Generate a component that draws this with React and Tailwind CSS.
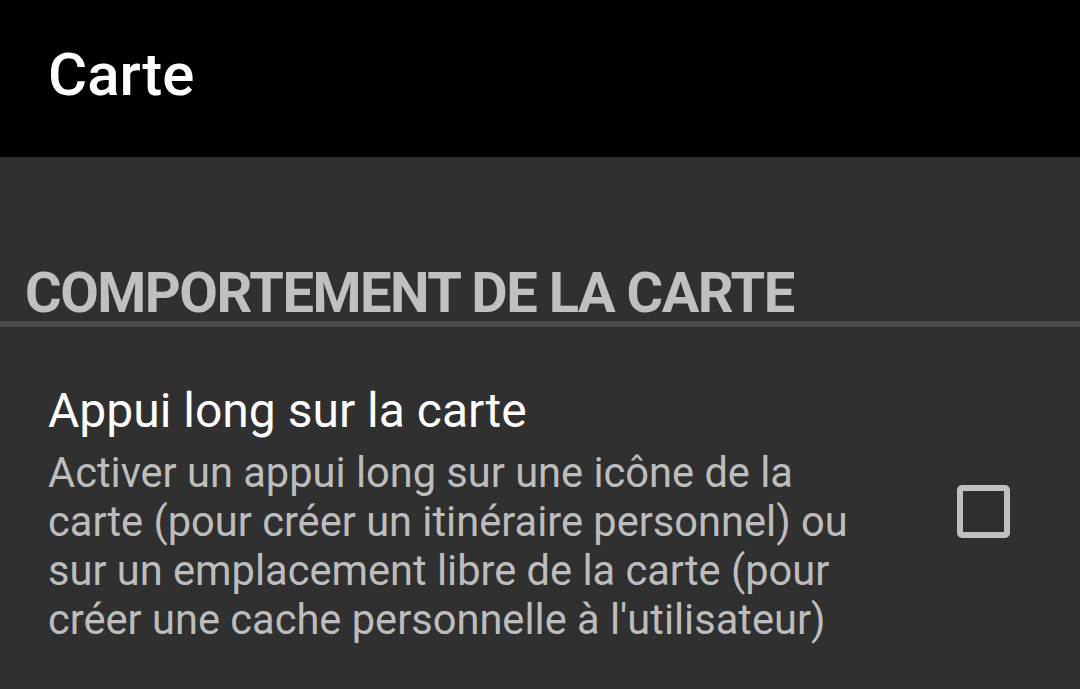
import React from "react";

function App() {
  return (
    <div className="w-[1080px] h-[689px] overflow-hidden bg-[#303030]" style={{ fontFamily: "Roboto, sans-serif" }}>
      <div className="h-[157px] bg-black flex items-center px-[48px]">
        <h1 className="text-[60px] font-medium text-white leading-none -mt-[8px]">Carte</h1>
      </div>
      <div className="pt-[106px]">
        <h3 className="px-[25px] text-[56px] font-bold text-[#c0c0c0] uppercase leading-[60px] tracking-[-1.5px]">
          Comportement de la carte
        </h3>
        <div className="h-[6px] bg-[#4a4a4a] -mt-[2px]"></div>
      </div>
      <div className="flex items-center pl-[48px] pt-[55px]">
        <div className="w-[815px]">
          <div className="text-[48px] text-white leading-[58px]">Appui long sur la carte</div>
          <p className="text-[41.6px] text-[#bdbdbd] leading-[49px] mt-[8px]">
            Activer un appui long sur une icône de la carte (pour créer un itinéraire personnel) ou sur un emplacement
            libre de la carte (pour créer une cache personnelle à l'utilisateur)
          </p>
        </div>
        <div className="w-[53px] h-[53px] border-[6px] border-[#c0c0c0] rounded-[5px] ml-[94px] -mt-[4px]"></div>
      </div>
    </div>
  );
}

export default App;
